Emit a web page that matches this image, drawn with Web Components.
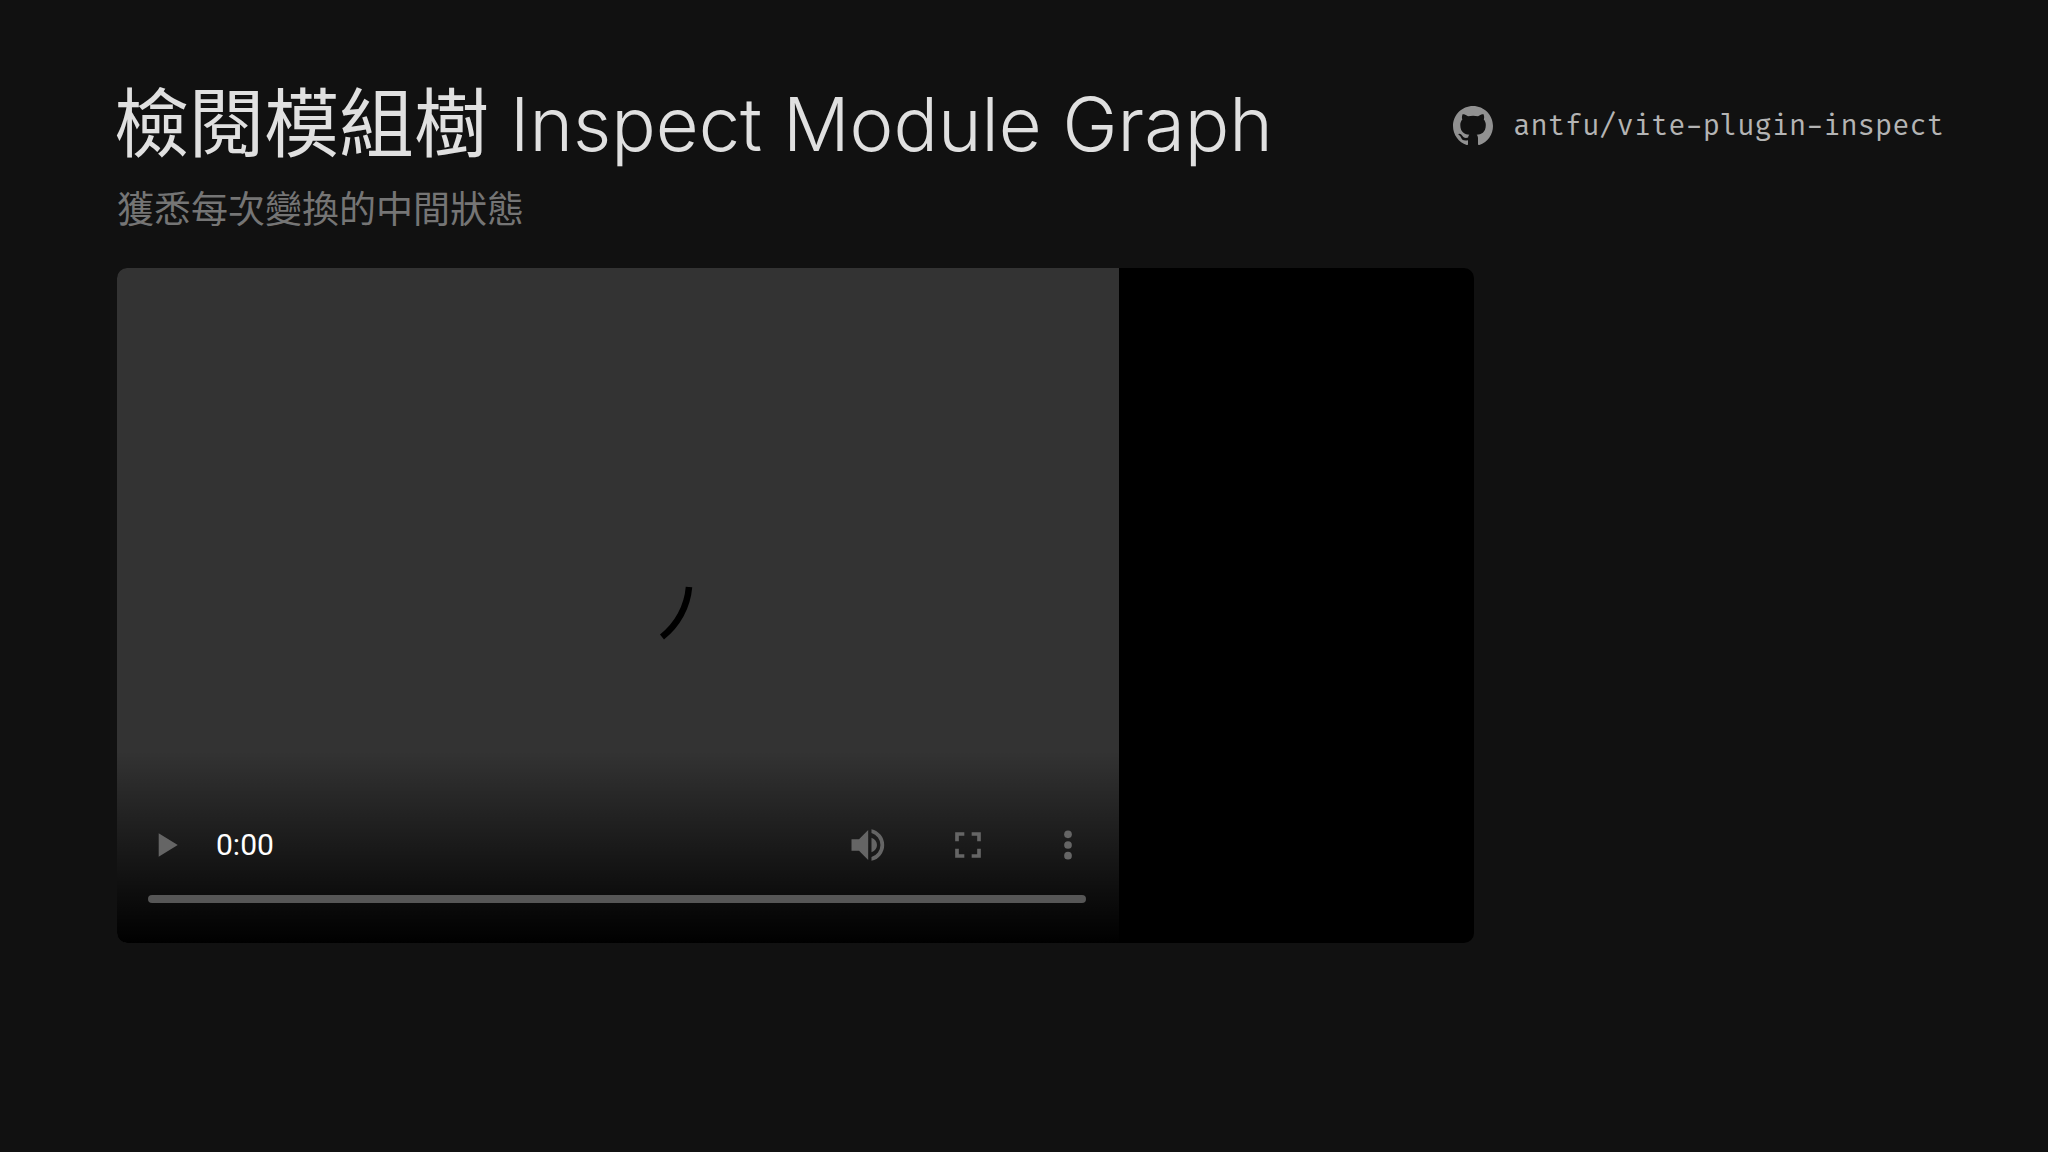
<!DOCTYPE html>
<html lang="zh-Hant">
<head>
<meta charset="utf-8">
<meta name="viewport" content="width=device-width, initial-scale=1">
<title>Inspect Module Graph</title>
<style>
  html { background: #111; }
  body {
    margin: 0;
    color: #e0e0e0;
    font-family: Inter, "Noto Sans CJK TC", sans-serif;
  }
  [lang="en"] { font-size: 74px; font-weight: 300; }
</style>
</head>
<body>

<slide-page>
  <slide-heading slot="header">
    檢閱模組樹 <span lang="en">Inspect Module Graph</span>
    <span slot="subtitle">獲悉每次變換的中間狀態</span>
  </slide-heading>
  <repo-link slot="header" repo="antfu/vite-plugin-inspect"></repo-link>
  <video-player time="0:00"></video-player>
</slide-page>

<script>
/* slide frame: header row on top, content below */
class SlidePage extends HTMLElement {
  constructor() {
    super();
    this.attachShadow({ mode: 'open' }).innerHTML = `
      <style>
        :host {
          display: block;
          box-sizing: border-box;
          min-height: 100vh;
          padding: 76px 104px 76px 117px;
        }
        header {
          display: flex;
          justify-content: space-between;
          align-items: flex-start;
          margin-bottom: 30px;
        }
      </style>
      <header><slot name="header"></slot></header>
      <main><slot></slot></main>
    `;
  }
}

/* title with a dimmed line under it */
class SlideHeading extends HTMLElement {
  constructor() {
    super();
    this.attachShadow({ mode: 'open' }).innerHTML = `
      <style>
        :host { display: block; margin-left: -3px; font-weight: 400; }
        h1 {
          margin: 0;
          font-size: 75px;
          line-height: 96px;
          font-weight: inherit;
          white-space: nowrap;
        }
        p {
          margin: 10px 0 0 3px;
          color: #757575;
          font-size: 37px;
          line-height: 56px;
        }
      </style>
      <h1><slot></slot></h1>
      <p><slot name="subtitle"></slot></p>
    `;
  }
}

/* <repo-link repo="owner/name"></repo-link> */
class RepoLink extends HTMLElement {
  constructor() {
    super();
    this.attachShadow({ mode: 'open' }).innerHTML = `
      <style>
        :host { display: block; }
        a {
          display: flex;
          align-items: center;
          gap: 20px;
          height: 100px;
          color: #b4b4b4;
          font-family: "Fira Code", "Liberation Mono", monospace;
          font-size: 28px;
          text-decoration: none;
        }
        svg { width: 40px; height: 40px; fill: #919191; }
      </style>
      <a>
        <svg viewBox="0 0 16 16" aria-hidden="true">
          <path d="M8 0C3.58 0 0 3.58 0 8c0 3.54 2.29 6.53 5.47 7.59.4.07.55-.17.55-.38 0-.19-.01-.82-.01-1.49-2.01.37-2.53-.49-2.69-.94-.09-.23-.48-.94-.82-1.13-.28-.15-.68-.52-.01-.53.63-.01 1.08.58 1.23.82.72 1.21 1.87.87 2.33.66.07-.52.28-.87.51-1.07-1.78-.2-3.64-.89-3.64-3.95 0-.87.31-1.59.82-2.15-.08-.2-.36-1.02.08-2.12 0 0 .67-.21 2.2.82.64-.18 1.32-.27 2-.27s1.36.09 2 .27c1.53-1.04 2.2-.82 2.2-.82.44 1.1.16 1.92.08 2.12.51.56.82 1.27.82 2.15 0 3.07-1.87 3.75-3.65 3.95.29.25.54.73.54 1.48 0 1.07-.01 1.93-.01 2.2 0 .21.15.46.55.38A8.01 8.01 0 0 0 16 8c0-4.42-3.58-8-8-8z"/>
        </svg>
        <span></span>
      </a>
    `;
  }

  connectedCallback() {
    const repo = this.getAttribute('repo');
    this.shadowRoot.querySelector('a').href = 'https://github.com/' + repo;
    this.shadowRoot.querySelector('span').textContent = repo;
  }
}

/* player in its loading state */
class VideoPlayer extends HTMLElement {
  constructor() {
    super();
    this.attachShadow({ mode: 'open' }).innerHTML = `
      <style>
        :host {
          display: block;
          width: 74.3%;
          background: #000;
          border-radius: 10px;
          overflow: hidden;
        }
        .panel {
          position: relative;
          display: flex;
          flex-direction: column;
          justify-content: flex-end;
          box-sizing: border-box;
          width: 73.8%;
          aspect-ratio: 1001 / 674;
          background: #333;
        }
        .spinner {
          position: absolute;
          inset: 0 0 36px;
          display: grid;
          place-items: center;
        }
        .spinner svg { width: 152px; height: 152px; }
        .controls {
          padding: 64px 33px 32px 31px;
          background: linear-gradient(transparent, #000);
        }
        .row {
          display: flex;
          align-items: center;
          height: 60px;
          margin-bottom: 12px;
        }
        time {
          flex: 1;
          margin-left: 28px;
          color: #fff;
          font-family: Roboto, sans-serif;
          font-size: 30px;
        }
        button {
          display: grid;
          place-items: center;
          width: 44px;
          height: 44px;
          padding: 0;
          border: 0;
          background: none;
        }
        button + button { margin-left: 56px; }
        button svg { width: 44px; height: 44px; fill: #656565; }
        .play { margin-left: -4px; }
        .more { margin-right: -4px; }
        input {
          display: block;
          width: 100%;
          height: 24px;
          margin: 0;
          appearance: none;
          background: none;
        }
        input::-webkit-slider-runnable-track {
          height: 8px;
          border-radius: 4px;
          background: #565656;
        }
        input::-webkit-slider-thumb {
          appearance: none;
          width: 0;
          height: 8px;
        }
      </style>
      <div class="panel">
        <div class="spinner">
          <svg viewBox="0 0 152 152" fill="none" stroke="#000" stroke-width="6.5" aria-hidden="true">
            <path d="M147 76A71 71 0 0 1 120 126"/>
          </svg>
        </div>
        <div class="controls">
          <div class="row">
            <button class="play" aria-label="Play">
              <svg viewBox="0 0 24 24"><path d="M8 5.6v12.8L18.4 12z"/></svg>
            </button>
            <time></time>
            <button aria-label="Mute">
              <svg viewBox="0 0 24 24"><path d="M3 8.8v6.4h4.1l5 5V3.8l-5 5zM13.9 8v8c2-.7 3-2.3 3-4s-1-3.3-3-4zM13.9 3.4v2a6.9 6.9 0 0 1 0 13.2v2a8.8 8.8 0 0 0 0-17.2z"/></svg>
            </button>
            <button aria-label="Full screen">
              <svg viewBox="0 0 24 24"><path d="M7 14H5v5h5v-2H7zM5 10h2V7h3V5H5zM17 17h-3v2h5v-5h-2zM14 5v2h3v3h2V5z"/></svg>
            </button>
            <button class="more" aria-label="More options">
              <svg viewBox="0 0 24 24"><circle cx="12" cy="6.2" r="2.1"/><circle cx="12" cy="12" r="2.1"/><circle cx="12" cy="17.8" r="2.1"/></svg>
            </button>
          </div>
          <input type="range" min="0" max="100" value="0" aria-label="Seek">
        </div>
      </div>
    `;
  }

  connectedCallback() {
    this.shadowRoot.querySelector('time').textContent = this.getAttribute('time') || '0:00';
  }
}

customElements.define('slide-page', SlidePage);
customElements.define('slide-heading', SlideHeading);
customElements.define('repo-link', RepoLink);
customElements.define('video-player', VideoPlayer);
</script>
</body>
</html>
